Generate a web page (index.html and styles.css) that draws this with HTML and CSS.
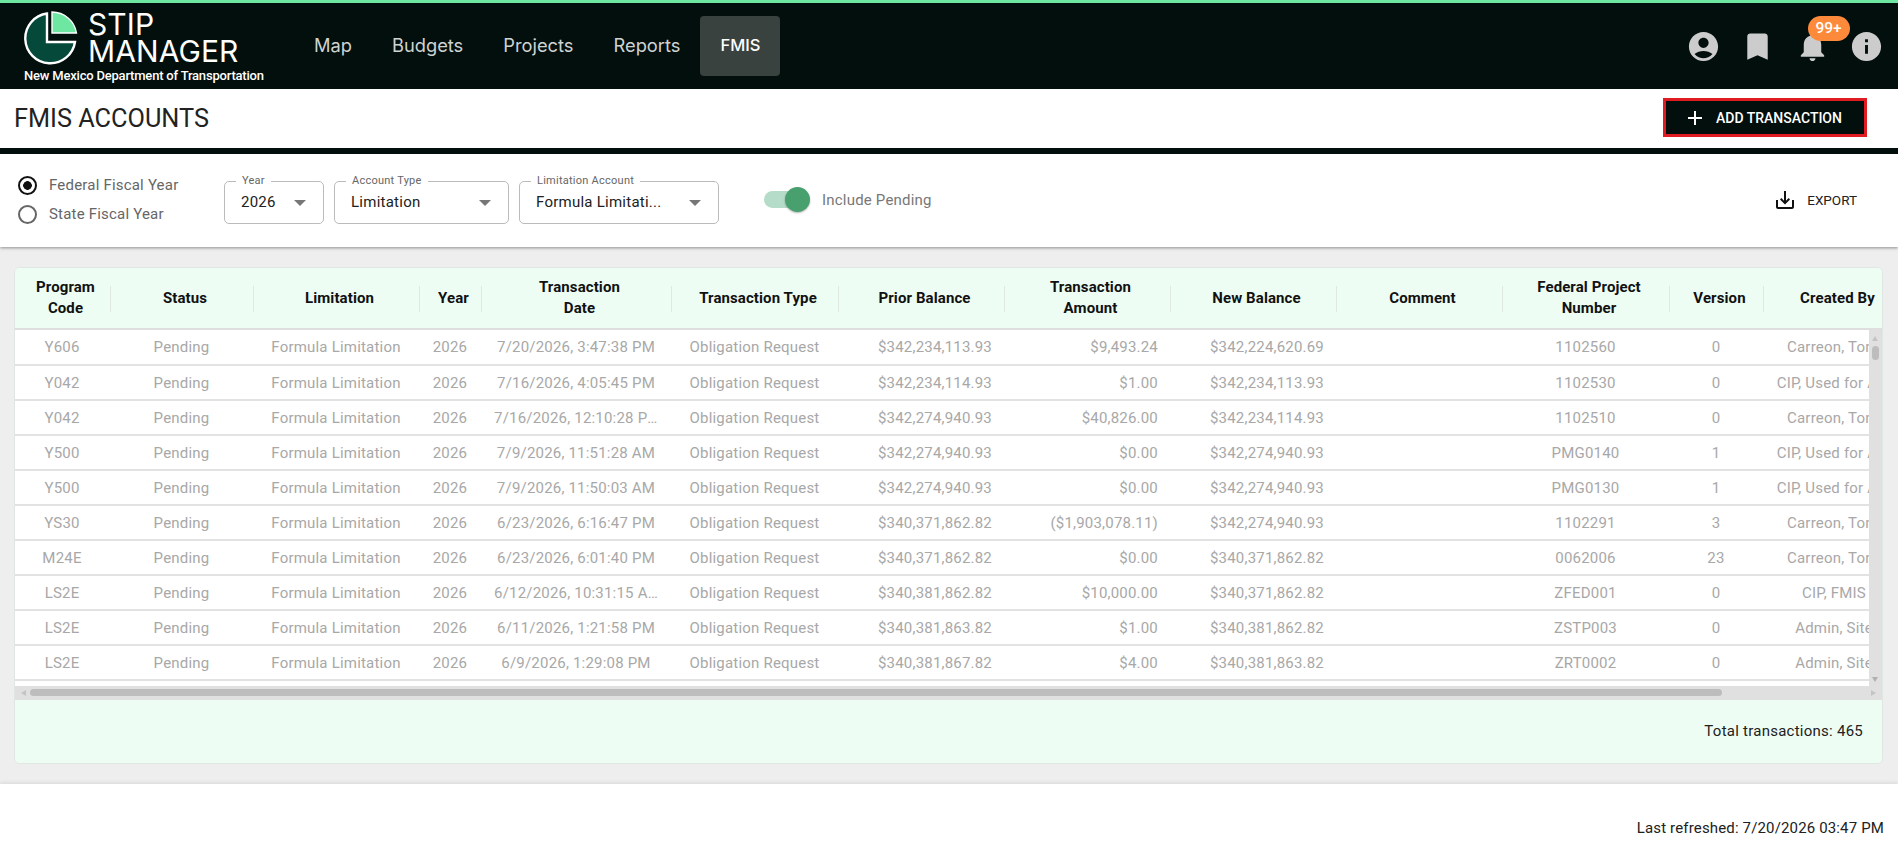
FILE: index.html
```html
<!DOCTYPE html>
<html lang="en">

<head>
    <meta charset="UTF-8">
    <meta name="viewport" content="width=device-width, initial-scale=1.0">
    <title>FMIS Accounts</title>

    <link rel="stylesheet" href="styles.css">

</head>

<body>

    <header class="navbar">
        <div class="brand">
            <div class="brand-top">
                <svg class="brand-logo" viewBox="24 10 56 56">
                    <path d="M47 13.5 A25 25 0 1 0 75 42 L47 42 Z" fill="#04493a" stroke="#fff" stroke-width="2.4"/>
                    <path d="M52 12 A25 25 0 0 1 76.5 33 L52 33 Z" fill="#6ee7a3" stroke="#fff" stroke-width="1.4"/>
                </svg>
                <div class="brand-name">STIP<br>MANAGER</div>
            </div>
            <div class="brand-sub">New Mexico Department of Transportation</div>
        </div>

        <nav class="nav-links">
            <a class="nav-link">Map</a>
            <a class="nav-link">Budgets</a>
            <a class="nav-link">Projects</a>
            <a class="nav-link">Reports</a>
            <a class="nav-link active">FMIS</a>
        </nav>

        <div class="nav-icons">
            <svg viewBox="0 0 24 24"><path d="M12 2C6.48 2 2 6.48 2 12s4.48 10 10 10 10-4.48 10-10S17.52 2 12 2zm0 4c1.93 0 3.5 1.57 3.5 3.5S13.93 13 12 13s-3.5-1.57-3.5-3.5S10.07 6 12 6zm0 14c-2.03 0-4.43-.82-6.14-2.88C7.55 15.8 9.68 15 12 15s4.45.8 6.14 2.12C16.43 19.18 14.03 20 12 20z"/></svg>
            <svg viewBox="0 0 24 24"><path d="M17 3H7c-1.1 0-2 .9-2 2v16l7-3 7 3V5c0-1.1-.9-2-2-2z"/></svg>
            <div class="bell">
                <svg viewBox="0 0 24 24"><path d="M12 22c1.1 0 2-.9 2-2h-4c0 1.1.89 2 2 2zm6-6v-5c0-3.07-1.64-5.64-4.5-6.32V4c0-.83-.67-1.5-1.5-1.5s-1.5.67-1.5 1.5v.68C7.63 5.36 6 7.92 6 11v5l-2 2v1h16v-1l-2-2z"/></svg>
                <span class="badge">99+</span>
            </div>
            <svg viewBox="0 0 24 24"><path d="M12 2C6.48 2 2 6.48 2 12s4.48 10 10 10 10-4.48 10-10S17.52 2 12 2zm1 15h-2v-6h2v6zm0-8h-2V7h2v2z"/></svg>
        </div>
    </header>

    <div class="title-bar">
        <h1>FMIS ACCOUNTS</h1>
        <button class="add-btn">
            <svg viewBox="0 0 24 24"><path d="M19 13h-6v6h-2v-6H5v-2h6V5h2v6h6v2z"/></svg>
            ADD TRANSACTION
        </button>
    </div>

    <div class="filters">
        <div class="radios">
            <label class="radio-row"><span class="radio checked"></span>Federal Fiscal Year</label>
            <label class="radio-row"><span class="radio"></span>State Fiscal Year</label>
        </div>

        <div class="select select-year">
            <span class="select-label">Year</span>
            <span class="select-value">2026</span>
            <span class="select-arrow"></span>
        </div>
        <div class="select select-type">
            <span class="select-label">Account Type</span>
            <span class="select-value">Limitation</span>
            <span class="select-arrow"></span>
        </div>
        <div class="select select-account">
            <span class="select-label">Limitation Account</span>
            <span class="select-value">Formula Limitati...</span>
            <span class="select-arrow"></span>
        </div>

        <div class="toggle-wrap">
            <span class="toggle"><span class="toggle-knob"></span></span>
            <span class="toggle-text">Include Pending</span>
        </div>

        <button class="export-btn">
            <svg viewBox="0 0 24 24"><path d="M19 12v7H5v-7H3v7c0 1.1.9 2 2 2h14c1.1 0 2-.9 2-2v-7h-2zm-6 .67l2.59-2.58L17 11.5l-5 5-5-5 1.41-1.41L11 12.67V3h2z"/></svg>
            EXPORT
        </button>
    </div>

    <main class="content">
        <div class="grid-card">
            <div class="grid-head">
                <table>
                    <colgroup>
                        <col class="w-code"><col class="w-status"><col class="w-limit"><col class="w-year"><col class="w-date"><col class="w-type"><col class="w-money"><col class="w-money"><col class="w-money"><col class="w-money"><col class="w-fed"><col class="w-ver"><col class="w-by">
                    </colgroup>
                    <tr>
                        <th>Program<br>Code</th>
                        <th>Status</th>
                        <th>Limitation</th>
                        <th>Year</th>
                        <th>Transaction<br>Date</th>
                        <th>Transaction Type</th>
                        <th>Prior Balance</th>
                        <th>Transaction<br>Amount</th>
                        <th>New Balance</th>
                        <th>Comment</th>
                        <th>Federal Project<br>Number</th>
                        <th>Version</th>
                        <th>Created By</th>
                    </tr>
                </table>
            </div>

            <div class="grid-middle">
                <div class="grid-body">
                    <table>
                        <colgroup>
                            <col class="w-code"><col class="w-status"><col class="w-limit"><col class="w-year"><col class="w-date"><col class="w-type"><col class="w-money"><col class="w-money"><col class="w-money"><col class="w-money"><col class="w-fed"><col class="w-ver"><col class="w-by">
                        </colgroup>
                        <tr>
                            <td>Y606</td><td>Pending</td><td>Formula Limitation</td><td>2026</td><td>7/20/2026, 3:47:38 PM</td><td>Obligation Request</td>
                            <td class="num">$342,234,113.93</td><td class="num">$9,493.24</td><td class="num">$342,224,620.69</td><td></td><td>1102560</td><td>0</td><td>Carreon, Tony</td>
                        </tr>
                        <tr>
                            <td>Y042</td><td>Pending</td><td>Formula Limitation</td><td>2026</td><td>7/16/2026, 4:05:45 PM</td><td>Obligation Request</td>
                            <td class="num">$342,234,114.93</td><td class="num">$1.00</td><td class="num">$342,234,113.93</td><td></td><td>1102530</td><td>0</td><td>CIP, Used for API</td>
                        </tr>
                        <tr>
                            <td>Y042</td><td>Pending</td><td>Formula Limitation</td><td>2026</td><td>7/16/2026, 12:10:28 PM</td><td>Obligation Request</td>
                            <td class="num">$342,274,940.93</td><td class="num">$40,826.00</td><td class="num">$342,234,114.93</td><td></td><td>1102510</td><td>0</td><td>Carreon, Tony</td>
                        </tr>
                        <tr>
                            <td>Y500</td><td>Pending</td><td>Formula Limitation</td><td>2026</td><td>7/9/2026, 11:51:28 AM</td><td>Obligation Request</td>
                            <td class="num">$342,274,940.93</td><td class="num">$0.00</td><td class="num">$342,274,940.93</td><td></td><td>PMG0140</td><td>1</td><td>CIP, Used for API</td>
                        </tr>
                        <tr>
                            <td>Y500</td><td>Pending</td><td>Formula Limitation</td><td>2026</td><td>7/9/2026, 11:50:03 AM</td><td>Obligation Request</td>
                            <td class="num">$342,274,940.93</td><td class="num">$0.00</td><td class="num">$342,274,940.93</td><td></td><td>PMG0130</td><td>1</td><td>CIP, Used for API</td>
                        </tr>
                        <tr>
                            <td>YS30</td><td>Pending</td><td>Formula Limitation</td><td>2026</td><td>6/23/2026, 6:16:47 PM</td><td>Obligation Request</td>
                            <td class="num">$340,371,862.82</td><td class="num">($1,903,078.11)</td><td class="num">$342,274,940.93</td><td></td><td>1102291</td><td>3</td><td>Carreon, Tony</td>
                        </tr>
                        <tr>
                            <td>M24E</td><td>Pending</td><td>Formula Limitation</td><td>2026</td><td>6/23/2026, 6:01:40 PM</td><td>Obligation Request</td>
                            <td class="num">$340,371,862.82</td><td class="num">$0.00</td><td class="num">$340,371,862.82</td><td></td><td>0062006</td><td>23</td><td>Carreon, Tony</td>
                        </tr>
                        <tr>
                            <td>LS2E</td><td>Pending</td><td>Formula Limitation</td><td>2026</td><td>6/12/2026, 10:31:15 AM</td><td>Obligation Request</td>
                            <td class="num">$340,381,862.82</td><td class="num">$10,000.00</td><td class="num">$340,371,862.82</td><td></td><td>ZFED001</td><td>0</td><td>CIP, FMIS</td>
                        </tr>
                        <tr>
                            <td>LS2E</td><td>Pending</td><td>Formula Limitation</td><td>2026</td><td>6/11/2026, 1:21:58 PM</td><td>Obligation Request</td>
                            <td class="num">$340,381,863.82</td><td class="num">$1.00</td><td class="num">$340,381,862.82</td><td></td><td>ZSTP003</td><td>0</td><td>Admin, Site</td>
                        </tr>
                        <tr>
                            <td>LS2E</td><td>Pending</td><td>Formula Limitation</td><td>2026</td><td>6/9/2026, 1:29:08 PM</td><td>Obligation Request</td>
                            <td class="num">$340,381,867.82</td><td class="num">$4.00</td><td class="num">$340,381,863.82</td><td></td><td>ZRT0002</td><td>0</td><td>Admin, Site</td>
                        </tr>
                    </table>
                </div>

                <div class="vscroll">
                    <span class="arrow arrow-up"></span>
                    <span class="vthumb"></span>
                    <span class="arrow arrow-down"></span>
                </div>
            </div>

            <div class="hscroll">
                <span class="arrow arrow-left"></span>
                <span class="hthumb"></span>
                <span class="arrow arrow-right"></span>
            </div>

            <div class="grid-foot">Total transactions: 465</div>
        </div>
    </main>

    <footer class="page-foot">Last refreshed: 7/20/2026 03:47 PM</footer>

</body>

</html>
```

FILE: styles.css
```css
* {
    box-sizing: border-box;
}

body {
    margin: 0;
    height: 865px;
    overflow: hidden;
    display: flex;
    flex-direction: column;
    font-family: Roboto, sans-serif;
    background-color: white;
    color: #212121;
}

/* top bar */
.navbar {
    height: 89px;
    flex-shrink: 0;
    border-top: 3px solid #6ee7a3;
    background-color: #020f0d;
    display: flex;
    align-items: center;
    padding-left: 24px;
    padding-right: 14px;
}

.brand {
    width: 290px;
    color: white;
}

.brand-top {
    display: flex;
    align-items: center;
    gap: 8px;
    height: 54px;
    margin-top: 3px;
}

.brand-logo {
    width: 56px;
    height: 56px;
    flex-shrink: 0;
}

.brand-name {
    font-family: Inter, sans-serif;
    font-size: 30px;
    line-height: 27px;
    letter-spacing: 0.1px;
}

.brand-sub {
    font-size: 13px;
    font-weight: 500;
    letter-spacing: -0.2px;
    margin-top: 3px;
    line-height: 16px;
}

.nav-links {
    display: flex;
    align-items: center;
    gap: 0;
    margin-left: -20px;
    flex-grow: 1;
}

.nav-link {
    font-family: Inter, sans-serif;
    font-size: 18.3px;
    color: #cfd3d2;
    padding: 0 20px 2px;
    height: 60px;
    display: flex;
    align-items: center;
}

.nav-link.active {
    background-color: #3a4240;
    border-radius: 4px;
    color: white;
    font-size: 16.5px;
    font-weight: 500;
}

.nav-icons {
    display: flex;
    align-items: center;
    gap: 19.5px;
}

.nav-icons svg {
    display: block;
    width: 35px;
    height: 35px;
    fill: #cccccc;
}

.bell {
    position: relative;
}

.badge {
    position: absolute;
    left: 13px;
    top: -13px;
    width: 42px;
    height: 25px;
    border-radius: 13px;
    background-color: #fd8a3a;
    color: white;
    font-size: 15.5px;
    font-weight: 500;
    display: flex;
    align-items: center;
    justify-content: center;
}

/* page title */
.title-bar {
    height: 65px;
    flex-shrink: 0;
    border-bottom: 6px solid #020f0d;
    display: flex;
    align-items: center;
    justify-content: space-between;
    padding-left: 14px;
    padding-right: 31px;
}

.title-bar h1 {
    margin: 0;
    font-size: 25.3px;
    font-weight: 400;
    color: #222;
}

.add-btn {
    width: 204px;
    height: 39px;
    margin-bottom: 2px;
    border: 3px solid #e01b22;
    background-color: #020f0d;
    color: white;
    font-family: Roboto, sans-serif;
    font-size: 14px;
    font-weight: 500;
    display: flex;
    align-items: center;
    gap: 9px;
    padding: 0 0 0 17px;
}

.add-btn svg {
    width: 24px;
    height: 24px;
    fill: white;
}

/* filter row */
.filters {
    height: 93px;
    flex-shrink: 0;
    display: flex;
    align-items: center;
    padding-left: 18px;
    padding-right: 41px;
    box-shadow: 0 1px 3px rgba(0, 0, 0, 0.4);
    position: relative;
}

.radios {
    display: flex;
    flex-direction: column;
    gap: 10px;
    width: 206px;
    margin-top: -1px;
}

.radio-row {
    display: flex;
    align-items: center;
    gap: 12px;
    font-size: 15px;
    letter-spacing: 0.2px;
    line-height: 19px;
    color: #666;
}

.radio {
    width: 19px;
    height: 19px;
    border: 2px solid #666;
    border-radius: 50%;
    flex-shrink: 0;
}

.radio.checked {
    border-color: #111;
    background: radial-gradient(circle, #111 0 4px, white 4.6px);
}

.select {
    position: relative;
    height: 43px;
    margin-top: 4px;
    margin-right: 10px;
    border: 1px solid #bbb;
    border-radius: 5px;
    display: flex;
    align-items: center;
    justify-content: space-between;
    padding: 0 17px 2px 16px;
    font-size: 15px;
    letter-spacing: 0.25px;
}

.select-year {
    width: 100px;
}

.select-type {
    width: 175px;
}

.select-account {
    width: 200px;
}

.select-label {
    position: absolute;
    left: 11px;
    top: -8px;
    padding: 0 6px;
    background-color: white;
    font-size: 11px;
    line-height: 14px;
    color: #666;
}

.select-arrow {
    width: 0;
    height: 0;
    margin-top: 2px;
    border-left: 6px solid transparent;
    border-right: 6px solid transparent;
    border-top: 6px solid #777;
}

.toggle-wrap {
    display: flex;
    align-items: center;
    gap: 20px;
    margin-left: 35px;
    margin-top: -2px;
    flex-grow: 1;
}

.toggle {
    width: 38px;
    height: 17px;
    border-radius: 9px;
    background-color: #b5dcc8;
    position: relative;
}

.toggle-knob {
    position: absolute;
    left: 21px;
    top: -4px;
    width: 25px;
    height: 25px;
    border-radius: 50%;
    background-color: #48a06f;
    box-shadow: 0 1px 2px rgba(0, 0, 0, 0.3);
}

.toggle-text {
    font-size: 15px;
    letter-spacing: 0.2px;
    color: #777;
}

.export-btn {
    border: none;
    background: none;
    padding: 0;
    margin-top: -2px;
    display: flex;
    align-items: center;
    gap: 10px;
    font-family: Roboto, sans-serif;
    font-size: 13.5px;
    color: #212121;
}

.export-btn svg {
    width: 24px;
    height: 24px;
    fill: #111;
}

/* grid */
.content {
    height: 537px;
    flex-shrink: 0;
    background-color: #eeeeee;
    padding: 20px 15px 20px 14px;
}

.grid-card {
    height: 497px;
    border: 1px solid #dfe7e2;
    border-radius: 6px;
    overflow: hidden;
    display: flex;
    flex-direction: column;
    background-color: white;
}

table {
    table-layout: fixed;
    width: 1891px;
    border-collapse: collapse;
}

.w-code { width: 96px; }
.w-status { width: 143px; }
.w-limit { width: 166px; }
.w-year { width: 62px; }
.w-date { width: 190px; }
.w-type { width: 167px; }
.w-money { width: 166px; }
.w-fed { width: 167px; }
.w-ver { width: 94px; }
.w-by { width: 142px; }

.grid-head {
    height: 62px;
    flex-shrink: 0;
    overflow: hidden;
    background-color: #eefdf4;
    border-bottom: 2px solid #dedede;
}

.grid-head th {
    position: relative;
    height: 60px;
    padding: 0 0 0 5px;
    font-size: 15px;
    font-weight: 700;
    letter-spacing: 0.1px;
    line-height: 21px;
    color: #111;
}

.grid-head th::after {
    content: "";
    position: absolute;
    right: 0;
    top: 18px;
    height: 26px;
    border-right: 1px solid #dfe9e3;
}

.grid-middle {
    height: 356px;
    flex-shrink: 0;
    display: flex;
}

.grid-body {
    flex-grow: 1;
    overflow: hidden;
}

.grid-body td {
    height: 35px;
    padding: 0 14px 0 12px;
    border-bottom: 2px solid #e2e2e2;
    font-size: 15px;
    letter-spacing: 0.2px;
    color: #a8a8a8;
    text-align: center;
    white-space: nowrap;
    overflow: hidden;
    text-overflow: ellipsis;
}

.grid-body td.num {
    padding: 0 13px;
    text-align: right;
}

.vscroll {
    width: 13px;
    flex-shrink: 0;
    background-color: #e0e0e0;
    position: relative;
}

.vthumb {
    position: absolute;
    left: 3px;
    top: 16px;
    width: 7px;
    height: 14px;
    border-radius: 4px;
    background-color: #bdbdbd;
}

.arrow {
    position: absolute;
    width: 0;
    height: 0;
    border-style: solid;
    border-color: transparent;
}

.arrow-up {
    left: 3px;
    top: 6px;
    border-width: 0 3.5px 5px;
    border-bottom-color: #c4c4c4;
}

.arrow-down {
    left: 3px;
    bottom: 4px;
    border-width: 5px 3.5px 0;
    border-top-color: #b0b0b0;
}

.arrow-left {
    left: 6px;
    top: 3.5px;
    border-width: 3.5px 5px 3.5px 0;
    border-right-color: #c4c4c4;
}

.arrow-right {
    right: 6px;
    top: 3.5px;
    border-width: 3.5px 0 3.5px 5px;
    border-left-color: #c4c4c4;
}

.hscroll {
    height: 14px;
    flex-shrink: 0;
    background-color: #e0e0e0;
    position: relative;
}

.hthumb {
    position: absolute;
    left: 15px;
    top: 3px;
    width: 1692px;
    height: 7px;
    border-radius: 4px;
    background-color: #bdbdbd;
}

.grid-foot {
    flex-grow: 1;
    background-color: #eefdf4;
    display: flex;
    align-items: center;
    justify-content: flex-end;
    padding-right: 19px;
    padding-bottom: 2px;
    font-size: 15px;
    letter-spacing: 0.25px;
    color: #212121;
}

/* bottom strip */
.page-foot {
    flex-grow: 1;
    position: relative;
    box-shadow: 0 -1px 4px rgba(0, 0, 0, 0.1);
    background-color: white;
    display: flex;
    align-items: center;
    justify-content: flex-end;
    padding-right: 14px;
    padding-top: 7px;
    font-size: 15px;
    letter-spacing: 0.15px;
    color: #212121;
}
```
